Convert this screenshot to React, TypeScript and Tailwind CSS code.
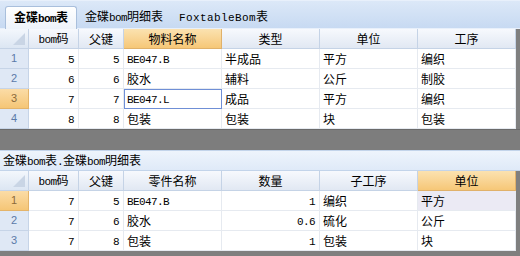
import React from 'react'

const widths = ['w-[29px]', 'w-[50px]', 'w-[45px]', 'w-[98px]', 'w-[98px]', 'w-[98px]', 'w-[98px]']

// latin in SimSun is narrow; give ascii runs a narrower mono face
const Txt = ({s}: {s: string}) => {
  const parts = s.match(/[\x20-\x7e]+|[^\x20-\x7e]+/g) || []
  return (
    <span>
      {parts.map((p, i) =>
        /^[\x20-\x7e]+$/.test(p)
          ? <span key={i} className="font-['Liberation_Mono',monospace] text-[11px] tracking-[-0.6px]">{p}</span>
          : <span key={i}>{p}</span>
      )}
    </span>
  )
}

type Cell = {v: string, num?: boolean}

const Header = ({cols, active}: {cols: string[], active: number}) => (
  <div className="flex h-[20px]">
    <div className={`${widths[0]} relative shrink-0 border-r border-b border-[#c5d3e6] bg-gradient-to-b from-[#f3f7fc] to-[#dce6f3]`}>
      <div className="absolute right-[3px] bottom-[3px] w-0 h-0 border-l-[12px] border-l-transparent border-b-[12px] border-b-[#c9d5e5]"/>
    </div>
    {cols.map((c, i) => (
      <div
        key={i}
        className={`${widths[i + 1]} shrink-0 flex items-center justify-center border-r border-b ${
          i === active
            ? 'bg-gradient-to-b from-[#fbe2b0] to-[#f6c777] border-[#e0b16a]'
            : 'bg-gradient-to-b from-[#f7f9fd] to-[#e1e8f3] border-[#c5d3e6]'
        }`}
      >
        <Txt s={c}/>
      </div>
    ))}
    <div className="flex-1 bg-[#7f7f7f]"/>
  </div>
)

const Row = ({n, cells, sel, focus, hl}: {n: number, cells: Cell[], sel?: boolean, focus?: number, hl?: number}) => (
  <div className="flex h-[20px]">
    <div className={`${widths[0]} shrink-0 flex items-center justify-center border-r border-b text-[11px] ${
      sel ? 'bg-gradient-to-b from-[#fbdca6] to-[#f5c676] border-[#e4b46a] text-[#8a6a3a]' : 'bg-[#dfe8f5] border-[#c6d4e7] text-[#5b7aa8]'
    } font-['Liberation_Sans',sans-serif]`}>
      {n}
    </div>
    {cells.map((c, i) => (
      <div
        key={i}
        className={`${widths[i + 1]} shrink-0 flex items-center border-r border-b ${
          focus === i ? 'border-[#6f8fd6] outline outline-1 outline-[#6f8fd6] -outline-offset-1' : 'border-[#e6eaf0]'
        } ${hl === i ? 'bg-[#ebeaf4]' : 'bg-white'} ${c.num ? 'justify-end pr-[4px]' : 'justify-start pl-[3px]'}`}
      >
        <Txt s={c.v}/>
      </div>
    ))}
    <div className="flex-1 bg-[#7f7f7f]"/>
  </div>
)

const grid1: Cell[][] = [
  [{v: '5', num: true}, {v: '5', num: true}, {v: 'BE047.B'}, {v: '半成品'}, {v: '平方'}, {v: '编织'}],
  [{v: '6', num: true}, {v: '6', num: true}, {v: '胶水'}, {v: '辅料'}, {v: '公斤'}, {v: '制胶'}],
  [{v: '7', num: true}, {v: '7', num: true}, {v: 'BE047.L'}, {v: '成品'}, {v: '平方'}, {v: '编织'}],
  [{v: '8', num: true}, {v: '8', num: true}, {v: '包装'}, {v: '包装'}, {v: '块'}, {v: '包装'}],
]

const grid2: Cell[][] = [
  [{v: '7', num: true}, {v: '5', num: true}, {v: 'BE047.B'}, {v: '1', num: true}, {v: '编织'}, {v: '平方'}],
  [{v: '7', num: true}, {v: '6', num: true}, {v: '胶水'}, {v: '0.6', num: true}, {v: '硫化'}, {v: '公斤'}],
  [{v: '7', num: true}, {v: '8', num: true}, {v: '包装'}, {v: '1', num: true}, {v: '包装'}, {v: '块'}],
]

const App = () => {
  return (
    <div className="w-[520px] h-[256px] overflow-hidden flex flex-col bg-[#7f7f7f] text-[12px] leading-none text-black font-['Noto_Sans_CJK_SC',sans-serif]">
      {/* tab strip */}
      <div className="h-[29px] shrink-0 flex items-end gap-[2px] pl-[5px] border-t border-[#e8f0fb] bg-gradient-to-b from-[#dce8f8] to-[#c7daf2] border-b border-[#a7bedc]">
        <div className="h-[23px] w-[72px] flex items-center justify-center font-bold bg-gradient-to-b from-[#ffffff] to-[#eef3fa] border border-b-0 border-[#a9bfdc] rounded-t-[3px] -mb-px">
          <Txt s="金碟bom表"/>
        </div>
        <div className="h-[22px] px-[6px] flex items-center">
          <Txt s="金碟bom明细表"/>
        </div>
        <div className="h-[22px] px-[8px] flex items-center">
          <span>
            <span className="font-['Liberation_Mono',monospace] text-[11px] tracking-[0.4px]">FoxtableBom</span>表
          </span>
        </div>
      </div>

      <Header cols={['bom码', '父键', '物料名称', '类型', '单位', '工序']} active={2}/>
      {grid1.map((r, i) => (
        <Row key={i} n={i + 1} cells={r} sel={i === 2} focus={i === 2 ? 2 : undefined}/>
      ))}

      <div className="h-[21px] shrink-0 bg-[#7d7d7d] border-t border-[#6a6a6a]"/>

      {/* relation label */}
      <div className="h-[21px] shrink-0 flex items-center pl-[3px] bg-gradient-to-b from-[#eef4fc] to-[#dfeaf8] border-t border-[#c3d4ea] border-b border-[#9fb6d4]">
        <Txt s="金碟bom表.金碟bom明细表"/>
      </div>

      <Header cols={['bom码', '父键', '零件名称', '数量', '子工序', '单位']} active={5}/>
      {grid2.map((r, i) => (
        <Row key={i} n={i + 1} cells={r} sel={i === 0} hl={i === 0 ? 5 : undefined}/>
      ))}
      <div className="flex-1 bg-[#7f7f7f]"/>
    </div>
  )
}

export default App
